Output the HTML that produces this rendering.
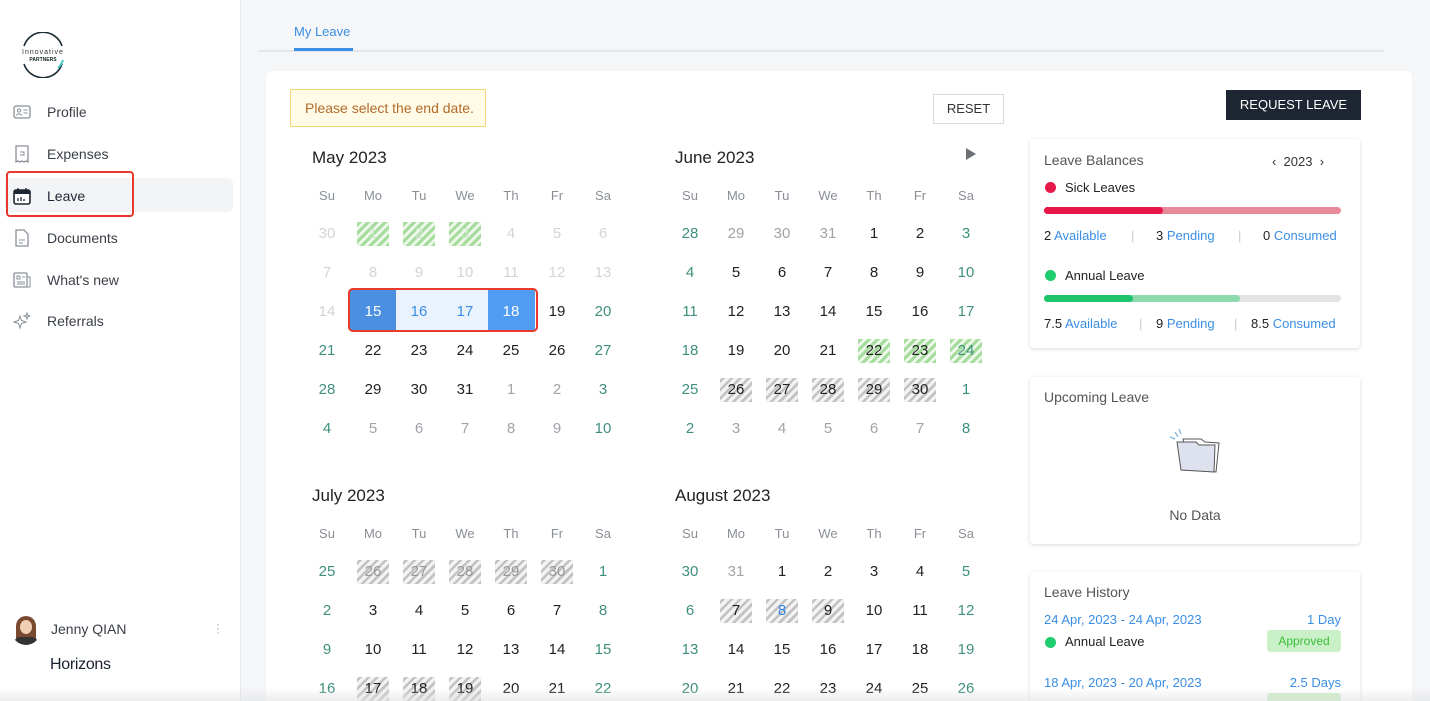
<!DOCTYPE html>
<html style="width:1430px;height:701px;overflow:hidden"><head><meta charset="utf-8"><style>
*{box-sizing:border-box;margin:0;padding:0}
body{width:1430px;height:701px;overflow:hidden;background:#f5f6f8;font-family:"Liberation Sans",sans-serif;position:relative;color:#222}
.abs{position:absolute}
#side{left:0;top:0;width:241px;height:701px;background:#fff;border-right:1px solid #e6e8eb}
.nav{position:absolute;left:47px;font-size:14px;color:#3a3f47}
.ico{position:absolute;left:13px;width:18px;height:18px}
table{position:absolute;border-collapse:collapse;font-size:15px}
td{width:46px;height:39px;text-align:center;padding:0}
tr.h td{height:37px;font-size:13px;color:#8a8f96}
.g{color:#d4d4d4}.o{color:#a0a4a8}.w{color:#3f8f7e}
.hg span,.hx span{display:inline-block;width:32px;height:24px;line-height:24px}
.hg span{background:repeating-linear-gradient(-45deg,#a6dd9e 0 3px,#eef9ec 3px 6px);color:#cfe6cb}
.hx span{background:repeating-linear-gradient(-45deg,#c2c2c2 0 2.5px,#f3f3f3 2.5px 6px)}
.mt{position:absolute;font-size:17px;color:#222}
.card{position:absolute;left:1030px;width:330px;background:#fff;border-radius:4px;box-shadow:0 1px 4px rgba(0,0,0,.15)}
.bl{color:#3a8ee6}
</style></head><body>
<div id="side" class="abs">
 <svg class="abs" style="left:18px;top:32px" width="50" height="46" viewBox="0 0 50 46"><path d="M6 14 A20 20 0 0 1 44 14" fill="none" stroke="#1a2a33" stroke-width="1.6"/><path d="M6 32 A20 20 0 0 0 44 32" fill="none" stroke="#1a2a33" stroke-width="1.6"/><path d="M40 36 A20 20 0 0 0 45 28" stroke="#4cc9c9" stroke-width="2" fill="none"/><text x="25" y="22" font-size="7" text-anchor="middle" fill="#333" font-family="Liberation Sans" letter-spacing="1">Innovative</text><text x="25" y="29" font-size="5" text-anchor="middle" fill="#122" font-weight="bold" font-family="Liberation Sans">PARTNERS</text></svg>
 <div class="abs" style="left:5px;top:178px;width:228px;height:34px;background:#f3f4f6;border-radius:6px"></div>
 <div class="abs" style="left:6px;top:171px;width:128px;height:46px;border:2px solid #e8392c;border-radius:4px"></div>
 <svg class="ico" style="top:103px" viewBox="0 0 18 18"><rect x="1" y="3" width="16" height="12" rx="2" fill="none" stroke="#8a9099" stroke-width="1.3"/><circle cx="6" cy="7.5" r="1.6" fill="none" stroke="#8a9099"/><path d="M3.5 12.5c0-2 5-2 5 0M10.5 7h4M10.5 10h4" stroke="#8a9099" fill="none"/></svg>
 <div class="nav" style="top:104px">Profile</div>
 <svg class="ico" style="top:145px" viewBox="0 0 18 18"><path d="M3 1h12v16l-2-1-2 1-2-1-2 1-2-1-2 1z" fill="none" stroke="#8a9099" stroke-width="1.3"/><path d="M7 7h4v3H7" fill="none" stroke="#8a9099"/></svg>
 <div class="nav" style="top:146px">Expenses</div>
 <svg class="ico" style="top:187px" viewBox="0 0 18 18"><rect x="1" y="3" width="16" height="14" rx="2" fill="#fff" stroke="#1f2633" stroke-width="1.6"/><rect x="1" y="3" width="16" height="4" fill="#1f2633"/><path d="M5 1v4M13 1v4M5 14v-3M8 14v-4M11 14v-2" stroke="#1f2633" stroke-width="1.3"/></svg>
 <div class="nav" style="top:188px;color:#1f2633">Leave</div>
 <svg class="ico" style="top:229px" viewBox="0 0 18 18"><path d="M3 1h8l4 4v12H3z" fill="none" stroke="#8a9099" stroke-width="1.3"/><path d="M6 11h6M6 14h4" stroke="#8a9099"/></svg>
 <div class="nav" style="top:230px">Documents</div>
 <svg class="ico" style="top:271px" viewBox="0 0 18 18"><rect x="1" y="2" width="13" height="14" rx="1" fill="none" stroke="#8a9099" stroke-width="1.3"/><path d="M14 6h3v10h-3M4 5h3v3H4zM9 6h3M4 11h8M4 13h8" stroke="#8a9099" fill="none"/></svg>
 <div class="nav" style="top:272px">What's new</div>
 <svg class="ico" style="top:312px" viewBox="0 0 18 18"><path d="M7 4l1.5 4.5L13 10l-4.5 1.5L7 16l-1.5-4.5L1 10l4.5-1.5zM14 1l.8 2.2L17 4l-2.2.8L14 7l-.8-2.2L11 4l2.2-.8z" fill="none" stroke="#8a9099"/></svg>
 <div class="nav" style="top:313px">Referrals</div>
 <div class="abs" style="left:11px;top:613px;width:30px;height:32px;border-radius:50%;overflow:hidden;background:#fff"><div class="abs" style="left:5px;top:3px;width:20px;height:26px;border-radius:10px 10px 4px 4px;background:#7a4a30"></div><div class="abs" style="left:9px;top:7px;width:12px;height:14px;border-radius:50%;background:#f0cfb5"></div><div class="abs" style="left:2px;top:24px;width:26px;height:10px;border-radius:8px 8px 0 0;background:#333"></div></div>
 <div class="nav" style="left:51px;top:621px;font-size:14px">Jenny QIAN</div>
 <div class="abs" style="left:216px;top:622px;color:#aaa;font-size:12px;line-height:4px">·<br>·<br>·</div>
 <div class="abs" style="left:50px;top:656px;font-size:16px;color:#1a2230;letter-spacing:-0.3px">Horizons</div>
</div>
<div class="abs" style="left:294px;top:24px;font-size:13px;color:#3a8ee6">My Leave</div>
<div class="abs" style="left:258px;top:50px;width:1126px;height:2px;background:#e4e6ea"></div>
<div class="abs" style="left:294px;top:48px;width:59px;height:3px;background:#3a8ee6"></div>
<div class="abs" style="left:266px;top:71px;width:1146px;height:630px;background:#fff;border-radius:6px 6px 0 0"></div>
<div class="abs" style="left:290px;top:89px;width:196px;height:38px;background:#fffbe6;border:1px solid #f3d67c;font-size:14px;color:#b26a2a;line-height:36px;padding-left:14px">Please select the end date.</div>
<div class="abs" style="left:933px;top:94px;width:71px;height:30px;border:1px solid #d9d9d9;font-size:13px;line-height:28px;text-align:center;color:#333">RESET</div>
<div class="abs" style="left:1226px;top:90px;width:135px;height:30px;background:#1f2633;color:#fff;font-size:13px;line-height:30px;text-align:center">REQUEST LEAVE</div>
<div class="mt" style="left:312px;top:148px">May 2023</div>
<div class="mt" style="left:675px;top:148px">June 2023</div>
<div class="abs" style="left:966px;top:148px;width:0;height:0;border-left:10px solid #6b7075;border-top:6px solid transparent;border-bottom:6px solid transparent"></div>
<div class="mt" style="left:312px;top:486px">July 2023</div>
<div class="mt" style="left:675px;top:486px">August 2023</div>
<div class="abs" style="left:350px;top:290px;width:46px;height:40px;background:#4a8fe0"></div>
<div class="abs" style="left:396px;top:290px;width:92px;height:40px;background:#eaf3fd"></div>
<div class="abs" style="left:488px;top:290px;width:47px;height:40px;background:#509cf2"></div>
<div class="abs" style="left:348px;top:288px;width:190px;height:44px;border:2px solid #e8392c;border-radius:5px"></div>
<table style="left:304px;top:177px"><tr class="h"><td>Su</td><td>Mo</td><td>Tu</td><td>We</td><td>Th</td><td>Fr</td><td>Sa</td></tr>
<tr><td class="g">30</td><td class="hg"><span>1</span></td><td class="hg"><span>2</span></td><td class="hg"><span>3</span></td><td class="g">4</td><td class="g">5</td><td class="g">6</td></tr>
<tr class="g"><td>7</td><td>8</td><td>9</td><td>10</td><td>11</td><td>12</td><td>13</td></tr>
<tr><td class="g">14</td><td style="color:#fff">15</td><td class="bl">16</td><td class="bl">17</td><td style="color:#fff">18</td><td>19</td><td class="w">20</td></tr>
<tr><td class="w">21</td><td>22</td><td>23</td><td>24</td><td>25</td><td>26</td><td class="w">27</td></tr>
<tr><td class="w">28</td><td>29</td><td>30</td><td>31</td><td class="o">1</td><td class="o">2</td><td class="w">3</td></tr>
<tr><td class="w">4</td><td class="o">5</td><td class="o">6</td><td class="o">7</td><td class="o">8</td><td class="o">9</td><td class="w">10</td></tr></table>
<table style="left:667px;top:177px"><tr class="h"><td>Su</td><td>Mo</td><td>Tu</td><td>We</td><td>Th</td><td>Fr</td><td>Sa</td></tr>
<tr><td class="w">28</td><td class="o">29</td><td class="o">30</td><td class="o">31</td><td>1</td><td>2</td><td class="w">3</td></tr>
<tr><td class="w">4</td><td>5</td><td>6</td><td>7</td><td>8</td><td>9</td><td class="w">10</td></tr>
<tr><td class="w">11</td><td>12</td><td>13</td><td>14</td><td>15</td><td>16</td><td class="w">17</td></tr>
<tr><td class="w">18</td><td>19</td><td>20</td><td>21</td><td class="hg"><span style="color:#222">22</span></td><td class="hg"><span style="color:#222">23</span></td><td class="hg"><span style="color:#3f8f7e">24</span></td></tr>
<tr><td class="w">25</td><td class="hx"><span>26</span></td><td class="hx"><span>27</span></td><td class="hx"><span>28</span></td><td class="hx"><span>29</span></td><td class="hx"><span>30</span></td><td class="w">1</td></tr>
<tr><td class="w">2</td><td class="o">3</td><td class="o">4</td><td class="o">5</td><td class="o">6</td><td class="o">7</td><td class="w">8</td></tr></table>
<table style="left:304px;top:515px"><tr class="h"><td>Su</td><td>Mo</td><td>Tu</td><td>We</td><td>Th</td><td>Fr</td><td>Sa</td></tr>
<tr><td class="w">25</td><td class="hx"><span style="color:#999">26</span></td><td class="hx"><span style="color:#999">27</span></td><td class="hx"><span style="color:#999">28</span></td><td class="hx"><span style="color:#999">29</span></td><td class="hx"><span style="color:#999">30</span></td><td class="w">1</td></tr>
<tr><td class="w">2</td><td>3</td><td>4</td><td>5</td><td>6</td><td>7</td><td class="w">8</td></tr>
<tr><td class="w">9</td><td>10</td><td>11</td><td>12</td><td>13</td><td>14</td><td class="w">15</td></tr>
<tr><td class="w">16</td><td class="hx"><span>17</span></td><td class="hx"><span>18</span></td><td class="hx"><span>19</span></td><td>20</td><td>21</td><td class="w">22</td></tr></table>
<table style="left:667px;top:515px"><tr class="h"><td>Su</td><td>Mo</td><td>Tu</td><td>We</td><td>Th</td><td>Fr</td><td>Sa</td></tr>
<tr><td class="w">30</td><td class="o">31</td><td>1</td><td>2</td><td>3</td><td>4</td><td class="w">5</td></tr>
<tr><td class="w">6</td><td class="hx"><span>7</span></td><td class="hx"><span style="color:#2f86e0">8</span></td><td class="hx"><span>9</span></td><td>10</td><td>11</td><td class="w">12</td></tr>
<tr><td class="w">13</td><td>14</td><td>15</td><td>16</td><td>17</td><td>18</td><td class="w">19</td></tr>
<tr><td class="w">20</td><td>21</td><td>22</td><td>23</td><td>24</td><td>25</td><td class="w">26</td></tr></table>

<div class="card" style="top:139px;height:209px;font-size:13px">
 <div class="abs" style="left:14px;top:13px;font-size:14px;color:#555">Leave Balances</div>
 <div class="abs" style="left:242px;top:15px;font-size:13px;color:#333">&#8249;&nbsp; 2023 &nbsp;&#8250;</div>
 <div class="abs" style="left:15px;top:43px;width:11px;height:11px;border-radius:50%;background:#e8174a"></div>
 <div class="abs" style="left:35px;top:41px">Sick Leaves</div>
 <div class="abs" style="left:14px;top:68px;width:297px;height:7px;border-radius:4px;background:#e9899c"></div>
 <div class="abs" style="left:14px;top:68px;width:119px;height:7px;border-radius:4px;background:#e8174a"></div>
 <div class="abs" style="left:14px;top:89px">2 <span class="bl">Available</span></div>
 <div class="abs" style="left:101px;top:89px;color:#ccc">|</div>
 <div class="abs" style="left:126px;top:89px">3 <span class="bl">Pending</span></div>
 <div class="abs" style="left:208px;top:89px;color:#ccc">|</div>
 <div class="abs" style="left:233px;top:89px">0 <span class="bl">Consumed</span></div>
 <div class="abs" style="left:15px;top:131px;width:11px;height:11px;border-radius:50%;background:#1fcc6e"></div>
 <div class="abs" style="left:35px;top:129px">Annual Leave</div>
 <div class="abs" style="left:14px;top:156px;width:297px;height:7px;border-radius:4px;background:#e3e3e3"></div>
 <div class="abs" style="left:14px;top:156px;width:196px;height:7px;border-radius:4px;background:#8fd9ae"></div>
 <div class="abs" style="left:14px;top:156px;width:89px;height:7px;border-radius:4px;background:#1fc46a"></div>
 <div class="abs" style="left:14px;top:177px">7.5 <span class="bl">Available</span></div>
 <div class="abs" style="left:109px;top:177px;color:#ccc">|</div>
 <div class="abs" style="left:126px;top:177px">9 <span class="bl">Pending</span></div>
 <div class="abs" style="left:204px;top:177px;color:#ccc">|</div>
 <div class="abs" style="left:221px;top:177px">8.5 <span class="bl">Consumed</span></div>
</div>
<div class="card" style="top:377px;height:167px">
 <div class="abs" style="left:14px;top:12px;font-size:14px;color:#555">Upcoming Leave</div>
 <svg class="abs" style="left:135px;top:45px" width="60" height="55" viewBox="0 0 60 55"><path d="M10 10l3 5M14 7l2 5M5 15l5 2" stroke="#7fb9e0" stroke-width="1.3"/><path d="M18 17l18 0l4 3l14 1l-3 29l-27 -2z" fill="#fff" stroke="#555" stroke-width="1"/><path d="M12 20l19 0l3 3l16 0l-1 27l-33 -2z" fill="#dde2ee" stroke="#555" stroke-width="1"/></svg>
 <div class="abs" style="left:0;width:330px;top:130px;text-align:center;font-size:14px;color:#555">No Data</div>
</div>
<div class="card" style="top:572px;height:129px;font-size:13px;border-radius:4px 4px 0 0;overflow:hidden">
 <div class="abs" style="left:14px;top:12px;font-size:14px;color:#555">Leave History</div>
 <div class="abs bl" style="left:14px;top:40px">24 Apr, 2023 - 24 Apr, 2023</div>
 <div class="abs bl" style="right:19px;top:40px">1 Day</div>
 <div class="abs" style="left:15px;top:65px;width:11px;height:11px;border-radius:50%;background:#1fcc6e"></div>
 <div class="abs" style="left:35px;top:62px">Annual Leave</div>
 <div class="abs" style="right:19px;top:58px;width:74px;height:22px;background:#c9f0c6;color:#3cbf3c;font-size:12px;line-height:22px;text-align:center;border-radius:3px">Approved</div>
 <div class="abs bl" style="left:14px;top:103px">18 Apr, 2023 - 20 Apr, 2023</div>
 <div class="abs bl" style="right:19px;top:103px">2.5 Days</div>
 <div class="abs" style="right:19px;top:121px;width:74px;height:22px;background:#c9f0c6;border-radius:3px"></div>
</div>
<div class="abs" style="left:0;top:688px;width:1430px;height:13px;background:linear-gradient(rgba(255,255,255,0),rgba(225,225,225,.6))"></div>
</body></html>
